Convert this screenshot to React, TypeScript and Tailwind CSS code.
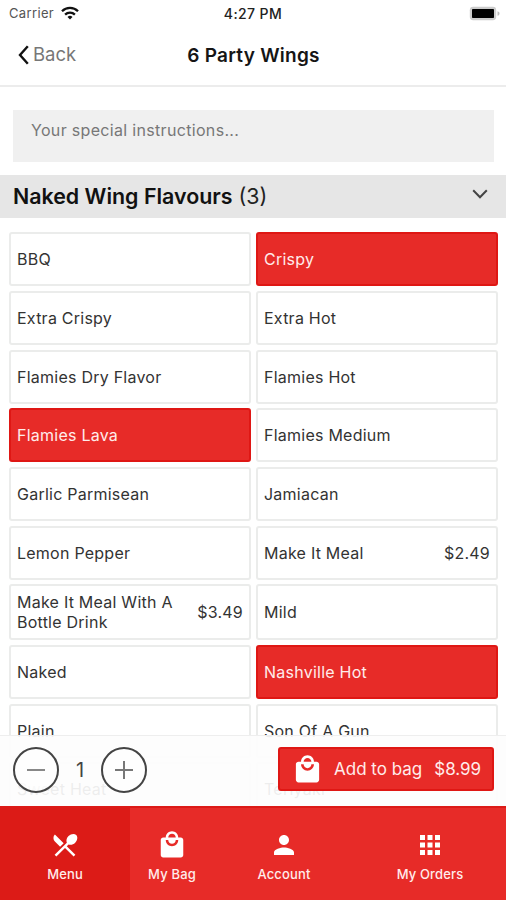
import { useState } from "react";
import { MdApps, MdLocalMall, MdPerson, MdRestaurantMenu } from "react-icons/md";

const flavours = [
  { name: "BBQ" },
  { name: "Crispy" },
  { name: "Extra Crispy" },
  { name: "Extra Hot" },
  { name: "Flamies Dry Flavor" },
  { name: "Flamies Hot" },
  { name: "Flamies Lava" },
  { name: "Flamies Medium" },
  { name: "Garlic Parmisean" },
  { name: "Jamiacan" },
  { name: "Lemon Pepper" },
  { name: "Make It Meal", price: "$2.49" },
  { name: "Make It Meal With A Bottle Drink", price: "$3.49" },
  { name: "Mild" },
  { name: "Naked" },
  { name: "Nashville Hot" },
  { name: "Plain" },
  { name: "Son Of A Gun" },
  { name: "Sweet Heat" },
  { name: "Teriyaki" },
];

const tabs = [
  { label: "Menu", icon: MdRestaurantMenu, size: "w-[130px] bg-[#dc1b17]" },
  { label: "My Bag", icon: MdLocalMall, size: "w-[84px]" },
  { label: "Account", icon: MdPerson, size: "w-[140px]" },
  { label: "My Orders", icon: MdApps, size: "w-[152px]" },
];

function StatusBar() {
  return (
    <div className="grid h-[26px] grid-cols-[1fr_auto_1fr] items-center px-[6px] text-[13px]">
      <div className="flex items-center gap-[7px] pl-[3px] text-[#555]">
        <span className="pt-px tracking-[0.35px]">Carrier</span>
        <svg width="18" height="14" viewBox="0 0 18 14" fill="none" stroke="#111" strokeWidth="2.3">
          <path d="M1 5.2a11.3 11.3 0 0 1 16 0" />
          <path d="M4.1 8.6a7 7 0 0 1 9.8 0" />
          <path d="M9 13.6l-2.5-2.7a3.6 3.6 0 0 1 5 0z" fill="#111" stroke="none" />
        </svg>
      </div>
      <span className="text-[14px] font-medium tracking-[0.4px] text-[#222]">4:27 PM</span>
      <svg className="justify-self-end" width="31" height="15" viewBox="0 0 31 15">
        <rect x="0.8" y="0.8" width="26.4" height="13.4" rx="3.4" fill="#ccc" />
        <rect x="3" y="3" width="22" height="9" rx="0.8" fill="#000" />
        <path d="M28.5 5.2c1.6.4 2 1.3 2 2.3s-.4 1.9-2 2.3z" fill="#bbb" />
      </svg>
    </div>
  );
}

export default function App() {
  const [selected, setSelected] = useState(["Crispy", "Flamies Lava", "Nashville Hot"]);
  const [qty, setQty] = useState(1);

  const toggle = (name: string) =>
    setSelected(selected.includes(name) ? selected.filter((n) => n !== name) : [...selected, name]);

  return (
    <div className="flex h-[900px] w-[506px] flex-col overflow-hidden bg-white font-[Inter,sans-serif] text-[#333]">
      <StatusBar />
      <header className="grid h-[61px] shrink-0 grid-cols-[1fr_auto_1fr] items-center border-b-2 border-[#ececec] pl-[18px] pr-[17px]">
        <button className="flex items-center gap-[4px] pb-px text-[18.5px] text-[#777]">
          <svg width="11" height="20" viewBox="0 0 11 20" fill="none" stroke="#111" strokeWidth="2.4">
            <path d="M9.8 1.2 2 10l7.8 8.8" />
          </svg>
          Back
        </button>
        <h1 className="pt-[2px] text-[19px] font-semibold tracking-[0.25px] text-[#151515]">6 Party Wings</h1>
      </header>

      <main className="relative flex-1 overflow-hidden">
        <div className="pl-[13px] pr-3 pt-[23px]">
          <textarea
            placeholder="Your special instructions..."
            className="block h-[52px] w-full resize-none bg-[#f0f0f0] px-[18px] py-[8px] text-[16px] leading-6 tracking-[0.32px] placeholder:text-[#777]"
          />
        </div>

        <div className="mt-[13px] flex h-[43px] items-center justify-between bg-[#e6e6e6] pl-[13px] pr-[18px]">
          <h2 className="text-[21.4px] text-[#222]">
            <span className="font-semibold text-[#111]">Naked Wing Flavours</span> (3)
          </h2>
          <svg className="mb-[5px]" width="16" height="10" viewBox="0 0 16 10" fill="none" stroke="#444" strokeWidth="2">
            <path d="M1.2 1.2 8 8.2l6.8-7" />
          </svg>
        </div>

        <div className="grid grid-cols-2 gap-x-[5px] gap-y-[4.7px] pl-[9px] pr-2 pt-[14.3px]">
          {flavours.map((f) => (
            <button
              key={f.name}
              onClick={() => toggle(f.name)}
              className={`flex items-center justify-between rounded-[3px] border-2 px-[6px] text-left text-[16px] leading-[20px] tracking-[0.24px] ${
                selected.includes(f.name) ? "border-[#df1714] bg-[#e72b28] text-[#ffeceb]" : "border-[#ebeceb] bg-white"
              } ${f.name.length > 20 ? "min-h-[56px]" : "min-h-[54px]"}`}
            >
              <span className="max-w-[165px]">{f.name}</span>
              {f.price && <span>{f.price}</span>}
            </button>
          ))}
        </div>

        {/* quantity bar floats above the list */}
        <div className="absolute inset-x-0 bottom-0 flex h-[71px] items-start justify-between border-t border-[#eee] bg-[#fdfdfd]/92 pl-[13px] pr-3 pt-[11px]">
          <div className="flex items-center">
            <button
              onClick={() => setQty(Math.max(1, qty - 1))}
              className="flex size-[46px] items-center justify-center rounded-full border-2 border-[#444] bg-white/60"
            >
              <svg width="18" height="18" viewBox="0 0 18 18" stroke="#888" strokeWidth="2">
                <path d="M0 9h18" />
              </svg>
            </button>
            <span className="w-[42px] text-center text-[20px] text-[#444]">{qty}</span>
            <button
              onClick={() => setQty(qty + 1)}
              className="flex size-[46px] items-center justify-center rounded-full border-2 border-[#444] bg-white/60"
            >
              <svg width="18" height="18" viewBox="0 0 18 18" stroke="#777" strokeWidth="2">
                <path d="M0 9h18M9 0v18" />
              </svg>
            </button>
          </div>
          <button className="flex h-[44px] w-[216px] items-center rounded-[3px] border-2 border-[#df1714] bg-[#e72b28] pl-[12px] text-[17px] text-[#ffeceb]">
            <MdLocalMall className="size-[31px] text-white" />
            <span className="ml-[11px] pt-[2px]">Add to bag</span>
            <span className="ml-[12px] pt-[2px]">$8.99</span>
          </button>
        </div>
      </main>

      <nav className="flex h-[94px] shrink-0 border-t-2 border-[#dc1b17] bg-[#e72b28] text-[#ffeceb]">
        {tabs.map(({ label, icon: Icon, size }) => (
          <button key={label} className={`flex flex-col items-center pt-[22px] ${size}`}>
            <Icon className="size-[30px] text-white" />
            <span className="mt-[6px] text-[13px] font-medium leading-4 tracking-[0.15px]">{label}</span>
          </button>
        ))}
      </nav>
    </div>
  );
}
